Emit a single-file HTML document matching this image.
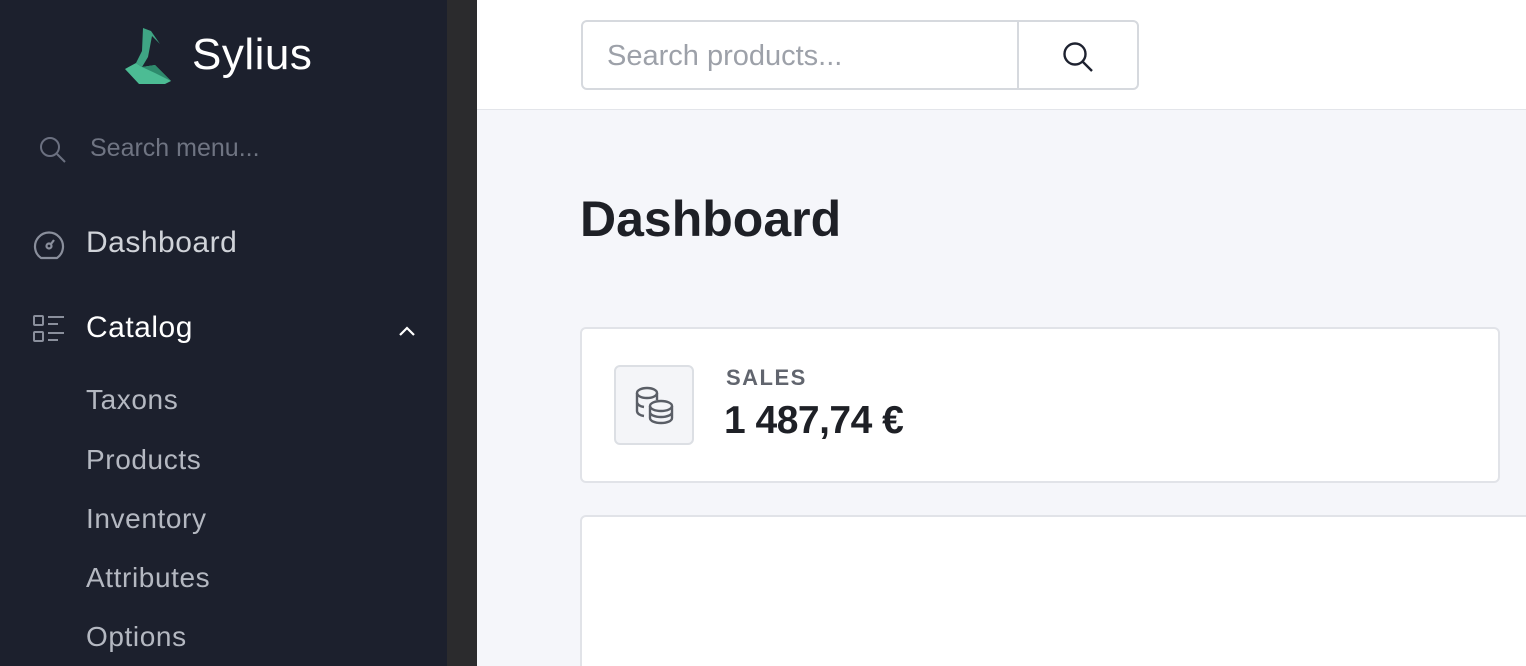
<!DOCTYPE html>
<html style="width:1526px;height:666px;overflow:hidden"><head><meta charset="utf-8"><style>
*{margin:0;padding:0;box-sizing:border-box}
body{width:1526px;height:666px;overflow:hidden;background:#f5f6fa;font-family:"Liberation Sans",sans-serif;position:relative}
.side{position:absolute;left:0;top:0;width:447px;height:666px;background:#1c202d}
.strip{position:absolute;left:447px;top:0;width:30px;height:666px;background:#2b2b2d}
.top{position:absolute;left:477px;top:0;right:0;height:110px;background:#fff;border-bottom:1px solid #e3e5ea}
.abs{position:absolute}
.nav{position:absolute;left:86px;color:#c5c8cf;font-size:30px;letter-spacing:0.5px}
.sub{position:absolute;left:86px;color:#b4b8c1;font-size:28px;letter-spacing:0.6px}
</style></head><body>
<div class="side">
 <svg class="abs" style="left:125px;top:27px" width="50" height="58" viewBox="0 0 50 58">
  <polygon points="18,1 26,4 35,17 27,9 23,30 17,40 11,36 17,24" fill="#3fa584"/>
  <polygon points="0,42 11,36 17,40 30,38 46,54 40,57 14,57" fill="#4cbc94"/>
  <polygon points="17,40 30,38 46,54 30,46" fill="#2e8a6c"/>
 </svg>
 <div class="abs" style="left:192px;top:30px;color:#fff;font-size:44px;letter-spacing:0.5px">Sylius</div>
 <svg class="abs" style="left:38px;top:135px" width="30" height="30" viewBox="0 0 30 30" fill="none" stroke="#6b7080" stroke-width="2"><circle cx="12" cy="12" r="9"/><path d="M19 19l8 8"/></svg>
 <div class="abs" style="left:90px;top:134px;color:#6f7482;font-size:25px">Search menu...</div>
 <svg class="abs" style="left:32px;top:228px" width="34" height="34" viewBox="0 0 34 34" fill="none" stroke="#8a8f9c" stroke-width="2.2"><path d="M9 30a14 14 0 1 1 16 0z" stroke-linejoin="round"/><circle cx="17" cy="18" r="2.5"/><path d="M19 16l3-4"/></svg>
 <div class="nav" style="top:226px;color:#d0d3d9">Dashboard</div>
 <svg class="abs" style="left:32px;top:314px" width="34" height="30" viewBox="0 0 34 30" fill="none" stroke="#8a8f9c" stroke-width="2"><rect x="2" y="2" width="9" height="9" rx="1"/><rect x="2" y="18" width="9" height="9" rx="1"/><path d="M16 3h16M16 10h10M16 19h16M16 26h10"/></svg>
 <div class="nav" style="top:311px;color:#fff;font-size:30px">Catalog</div>
 <svg class="abs" style="left:398px;top:324px" width="18" height="14" viewBox="0 0 18 14" fill="none" stroke="#fff" stroke-width="2.2"><path d="M2 11l7-7 7 7"/></svg>
 <div class="sub" style="top:384px">Taxons</div>
 <div class="sub" style="top:444px">Products</div>
 <div class="sub" style="top:503px">Inventory</div>
 <div class="sub" style="top:562px">Attributes</div>
 <div class="sub" style="top:621px">Options</div>
</div>
<div class="strip"></div>
<div class="top">
 <div class="abs" style="left:104px;top:20px;width:558px;height:70px;border:2px solid #d6d9de;border-radius:6px;background:#fff">
  <div class="abs" style="left:24px;top:18px;color:#9da1a9;font-size:29px">Search products...</div>
  <div class="abs" style="left:434px;top:0;width:2px;height:66px;background:#d6d9de"></div>
  <svg class="abs" style="left:478px;top:18px" width="34" height="34" viewBox="0 0 34 34" fill="none" stroke="#1e2230" stroke-width="2.4"><circle cx="14" cy="14" r="10.5"/><path d="M22 22l9 9"/></svg>
 </div>
</div>
<div class="abs" style="left:580px;top:190px;font-size:50px;font-weight:bold;color:#1e2026">Dashboard</div>
<div class="abs" style="left:580px;top:327px;width:920px;height:156px;background:#fff;border:2px solid #e1e3e8;border-radius:6px"></div>
<div class="abs" style="left:614px;top:365px;width:80px;height:80px;background:#f4f5f8;border:2px solid #dcdfe4;border-radius:6px">
 <svg class="abs" style="left:16px;top:16px" width="46" height="46" viewBox="0 0 46 46" fill="none" stroke="#5a5e66" stroke-width="2.4"><ellipse cx="15" cy="10" rx="10" ry="5"/><path d="M5 10v18c0 2.5 3 4.5 7 5M25 10v7M5 19c0 2.5 3 4.5 7 5"/><ellipse cx="29" cy="23" rx="11" ry="5"/><path d="M18 23v12c0 3 5 5 11 5s11-2 11-5V23M18 29c0 3 5 5 11 5s11-2 11-5"/></svg>
</div>
<div class="abs" style="left:726px;top:365px;font-size:22px;font-weight:bold;color:#61656e;letter-spacing:1.5px">SALES</div>
<div class="abs" style="left:724px;top:399px;font-size:39px;font-weight:bold;color:#1e2026;letter-spacing:-0.5px">1 487,74 €</div>
<div class="abs" style="left:580px;top:515px;width:960px;height:151px;background:#fff;border:2px solid #e1e3e8;border-bottom:none;border-radius:6px 6px 0 0"></div>
</body></html>
